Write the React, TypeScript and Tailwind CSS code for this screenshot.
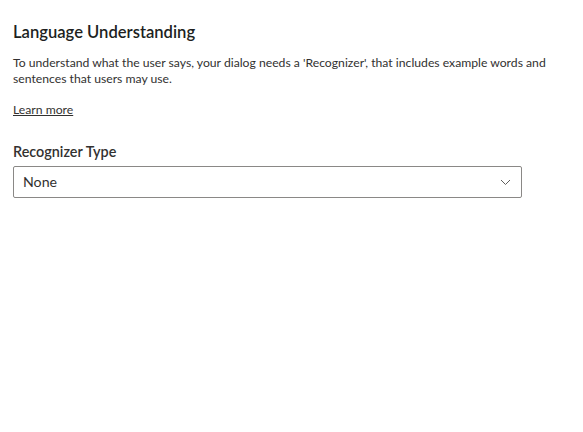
import React from "react";

export default function App() {
  return (
    <div className="w-[583px] h-[432px] bg-white text-[#323130] px-[13px] pt-[20px]" style={{ fontFamily: "Lato, 'Segoe UI', sans-serif" }}>
      <h1 className="text-[16.6px] leading-[24px] font-semibold text-[#201f1e]">Language Understanding</h1>
      <p className="mt-[11px] text-[12.2px] leading-[16px]">
        To understand what the user says, your dialog needs a 'Recognizer', that includes example words and
        <br />
        sentences that users may use.
      </p>
      <a href="#" className="inline-block mt-[15px] text-[12.2px] leading-[16px] underline text-[#323130]">Learn more</a>
      <div className="mt-[22px] text-[14.4px] leading-[20px] font-semibold">Recognizer Type</div>
      <div className="mt-[4px] w-[509px] h-[32px] border border-[#8a8886] rounded-[2px] flex items-center justify-between pl-[9px] pr-[10px]">
        <span className="text-[14.2px]">None</span>
        <svg width="11" height="7" viewBox="0 0 11 7" fill="none">
          <path d="M1 1 L5.5 5.5 L10 1" stroke="#605e5c" strokeWidth="1" />
        </svg>
      </div>
    </div>
  );
}
